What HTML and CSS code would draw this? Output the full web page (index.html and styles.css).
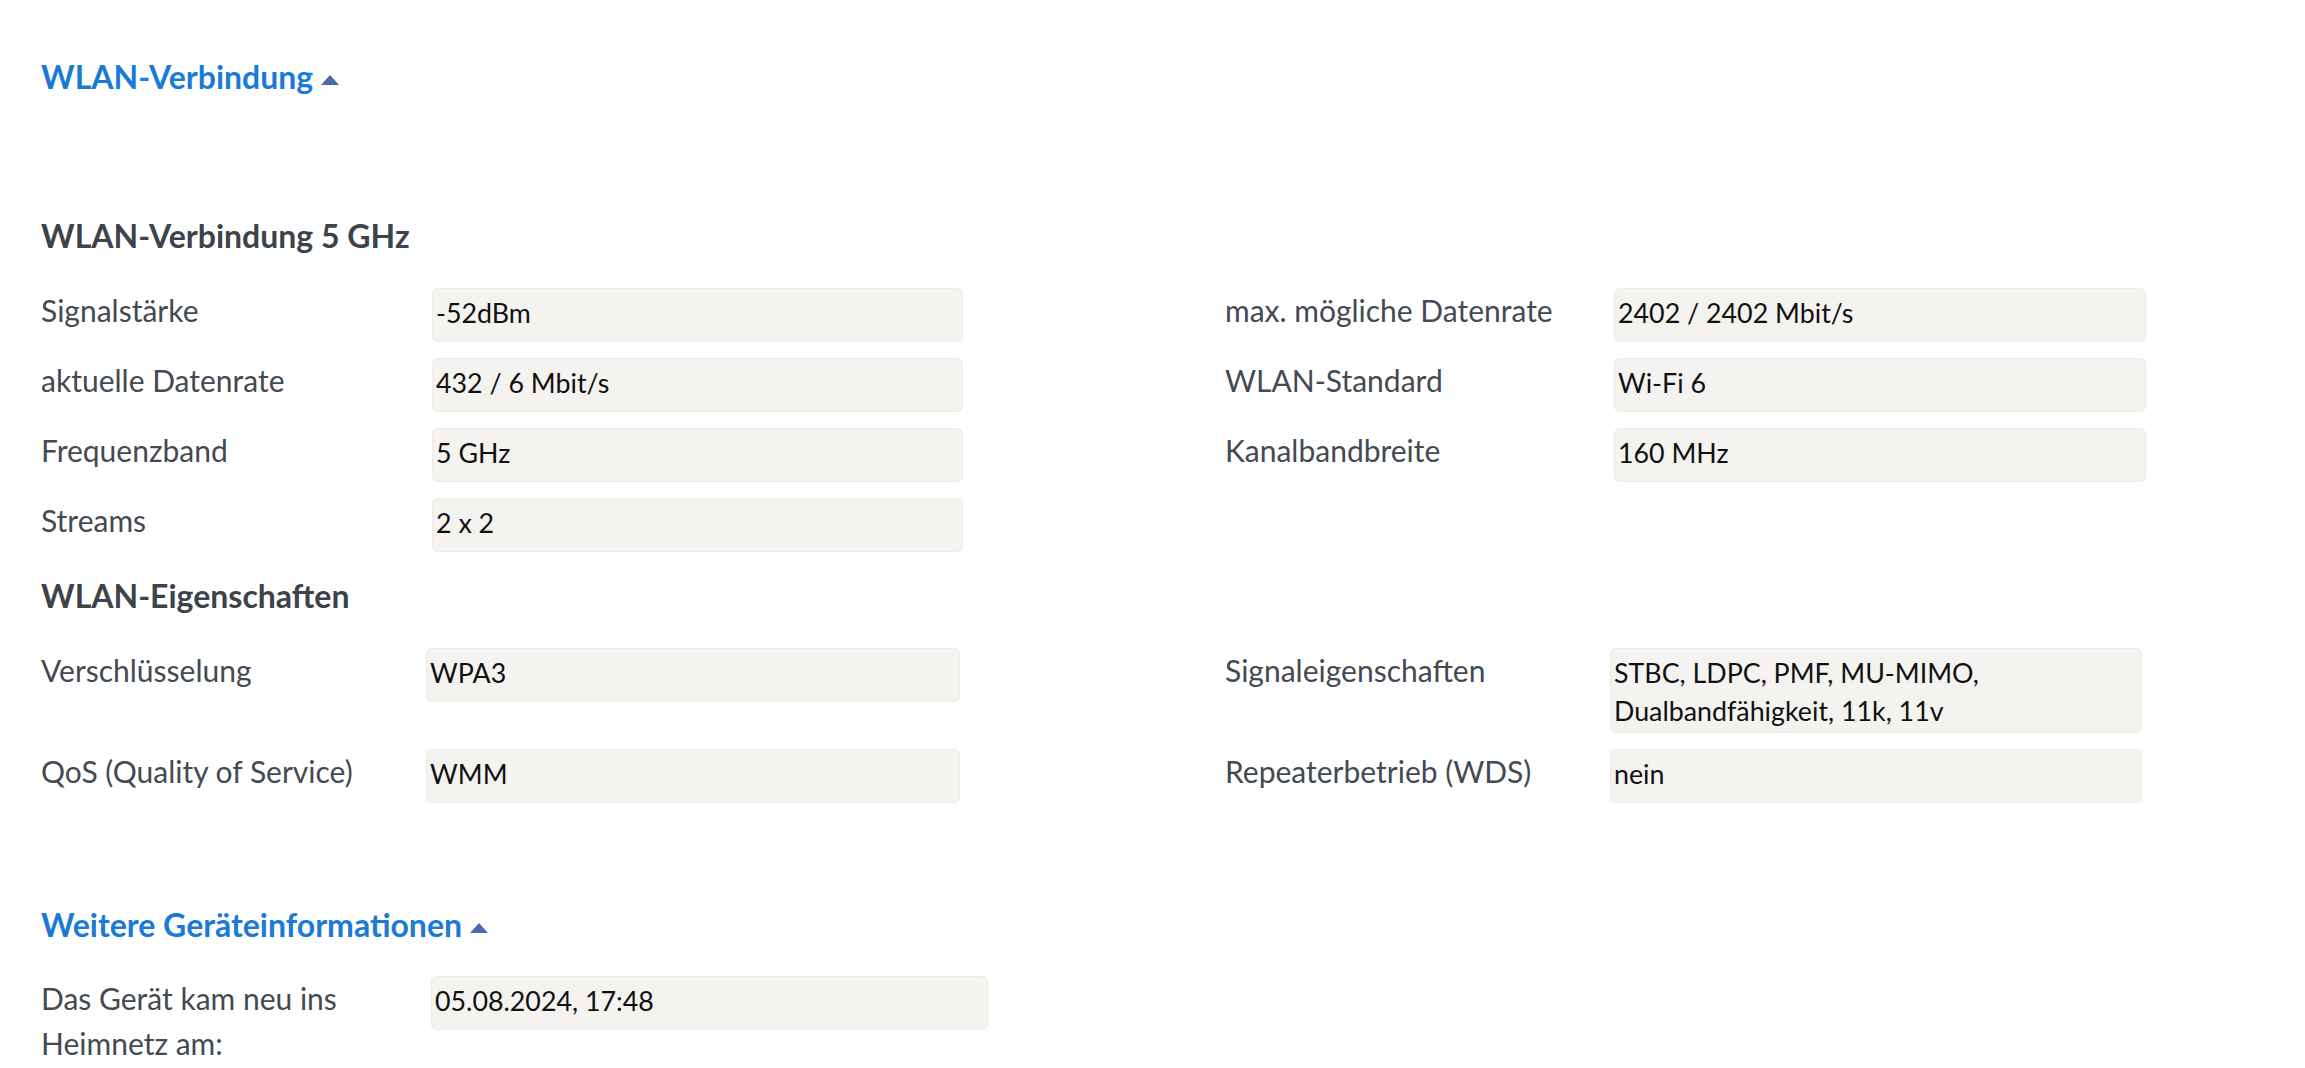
FILE: index.html
```html
<!DOCTYPE html>
<html lang="de">
<head>
<meta charset="utf-8">
<title>WLAN-Verbindung</title>
<link rel="stylesheet" href="styles.css">
</head>
<body>
<main class="page">
  <h2 class="toggle toggle-first">WLAN-Verbindung<span class="caret"></span></h2>

  <h3 class="section-title section-title-first">WLAN-Verbindung 5 GHz</h3>
  <div class="grid grid-conn">
    <div class="label">Signalstärke</div>
    <div class="value">-52dBm</div>
    <div class="label">max. mögliche Datenrate</div>
    <div class="value">2402 / 2402 Mbit/s</div>

    <div class="label">aktuelle Datenrate</div>
    <div class="value">432 / 6 Mbit/s</div>
    <div class="label">WLAN-Standard</div>
    <div class="value">Wi-Fi 6</div>

    <div class="label">Frequenzband</div>
    <div class="value">5 GHz</div>
    <div class="label">Kanalbandbreite</div>
    <div class="value">160 MHz</div>

    <div class="label">Streams</div>
    <div class="value">2 x 2</div>
  </div>

  <h3 class="section-title">WLAN-Eigenschaften</h3>
  <div class="grid grid-props">
    <div class="label">Verschlüsselung</div>
    <div class="value">WPA3</div>
    <div class="label">Signaleigenschaften</div>
    <div class="value">STBC, LDPC, PMF, MU-MIMO, Dualbandfähigkeit, 11k, 11v</div>

    <div class="label">QoS (Quality of Service)</div>
    <div class="value">WMM</div>
    <div class="label">Repeaterbetrieb (WDS)</div>
    <div class="value">nein</div>
  </div>

  <h2 class="toggle toggle-more">Weitere Geräteinformationen<span class="caret"></span></h2>
  <div class="grid grid-more">
    <div class="label">Das Gerät kam neu ins Heimnetz am:</div>
    <div class="value">05.08.2024, 17:48</div>
  </div>
</main>
</body>
</html>
```
FILE: styles.css
```css
html, body {
  margin: 0;
  padding: 0;
  background: #ffffff;
}

.page {
  padding: 57px 0 0 41px;
  font-family: Lato, "Liberation Sans", sans-serif;
}

.toggle {
  margin: 0;
  font-size: 32px;
  line-height: 40px;
  font-weight: 700;
  color: #1a7ad6;
}

.caret {
  display: inline-block;
  width: 0;
  height: 0;
  margin-left: 8px;
  border-left: 9px solid transparent;
  border-right: 9px solid transparent;
  border-bottom: 10px solid #4a6aa6;
  vertical-align: 4px;
}

.toggle-more {
  margin-top: 102px;
  margin-bottom: 31px;
}

.section-title {
  margin: 24px 0 32px;
  font-size: 32px;
  line-height: 40px;
  font-weight: 700;
  color: #3c434b;
}

.section-title-first {
  margin-top: 119px;
}

.grid {
  display: grid;
  row-gap: 16px;
  align-items: start;
}

.grid-conn {
  grid-template-columns: 391px 531px 262px 389px 532px;
}

.grid-conn .label:nth-child(4n+3) {
  grid-column: 4;
}

.grid-conn .value:nth-child(4n) {
  grid-column: 5;
}

.grid-props {
  grid-template-columns: 385px 534px 265px 385px 532px;
}

.grid-props .label:nth-child(4n+3) {
  grid-column: 4;
}

.grid-props .value:nth-child(4n) {
  grid-column: 5;
}

.grid-more {
  grid-template-columns: 390px 557px;
}

.label {
  font-size: 30px;
  line-height: 45px;
  color: #434a52;
  padding-right: 20px;
}

.value {
  box-sizing: border-box;
  min-height: 54px;
  padding: 5px 12px 2px 3px;
  font-size: 26.8px;
  line-height: 38px;
  color: #111111;
  background: #f4f3f0;
  border: 1px solid #ecebe7;
  border-radius: 6px;
}
```
